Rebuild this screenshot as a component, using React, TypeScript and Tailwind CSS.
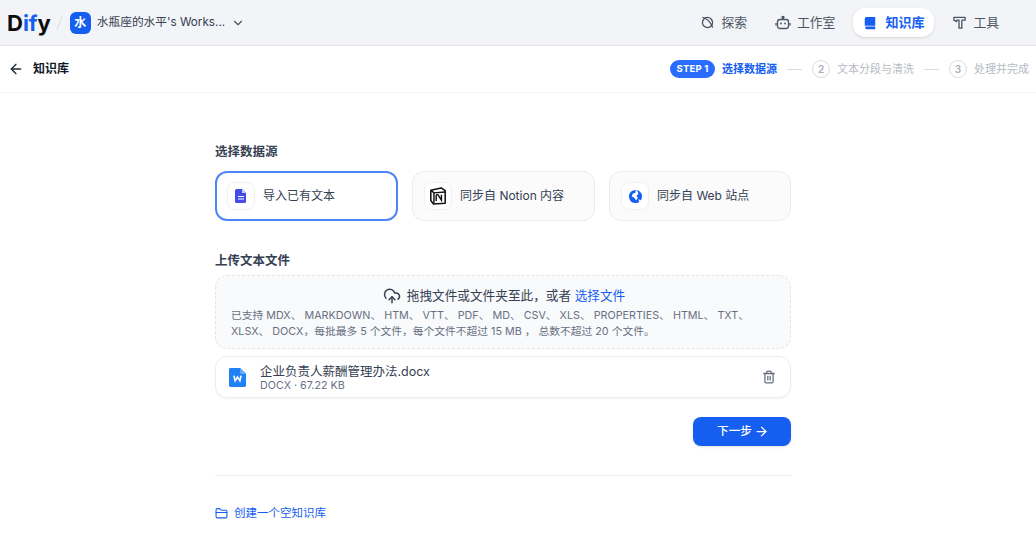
import { ArrowLeft, ArrowRight, ChevronDown, CloudUpload, Trash2, FolderClosed } from 'lucide-react';

const font = "font-['Inter','Noto_Sans_CJK_SC',sans-serif]";

function ExploreIcon() {
  return (
    <svg viewBox="0 0 16 16" className="w-[15px] h-[15px]" fill="none" stroke="#4b5563" strokeWidth="1.4">
      <circle cx="8" cy="8" r="5.4" />
      <path d="M2.5 2.500c4 .2 9.500 5.500 11 11" />
    </svg>
  );
}

function RobotIcon() {
  return (
    <svg viewBox="0 0 16 16" className="w-[16px] h-[16px]" fill="none" stroke="#4b5563" strokeWidth="1.3">
      <rect x="2.500" y="4.500" width="11" height="9" rx="2.500" />
      <circle cx="8" cy="2.300" r="1" fill="#4b5563" />
      <path d="M8 3v1.500M1 8v2.500M15 8v2.500" />
      <circle cx="6" cy="8.500" r=".9" fill="#4b5563" stroke="none" />
      <circle cx="10" cy="8.500" r=".9" fill="#4b5563" stroke="none" />
    </svg>
  );
}

function BookIcon() {
  return (
    <svg viewBox="0 0 16 16" className="w-[14px] h-[14px]" fill="#155eef">
      <path d="M4 1h9.500a.5.5 0 0 1 .5.5V11H4a2 2 0 0 0-2 .6V3a2 2 0 0 1 2-2Z" />
      <path d="M4 12h10v3H4a1.500 1.500 0 0 1 0-3Z" />
    </svg>
  );
}

function HammerIcon() {
  return (
    <svg viewBox="0 0 16 16" className="w-[15px] h-[15px]" fill="none" stroke="#4b5563" strokeWidth="1.4">
      <path d="M2 2.500h12v3h-3.500V14H7.500V5.500H5V7L2 5.500Z" strokeLinejoin="round" />
    </svg>
  );
}

function DocIcon() {
  return (
    <svg viewBox="0 0 16 16" className="w-[16px] h-[16px]">
      <path d="M3.500 1H9l4 4v8.500A1.500 1.500 0 0 1 11.500 15h-8A1.500 1.500 0 0 1 2 13.500v-11A1.500 1.500 0 0 1 3.500 1Z" fill="#444ce7" />
      <path d="M9 1v4h4Z" fill="#c7d0fb" />
      <path d="M5 8.500h6M5 11h6" stroke="#fff" strokeWidth="1.100" />
    </svg>
  );
}

function NotionIcon() {
  return (
    <svg viewBox="0 0 20 20" className="w-[18px] h-[18px]">
      <path d="M2 3.500 13.500 1l4.500 3v14L5 19l-3-4Z" fill="#fff" stroke="#111" strokeWidth="1.700" strokeLinejoin="round" />
      <path d="M2.500 4 5.500 6.500 18 5.500" fill="none" stroke="#111" strokeWidth="1.600" />
      <path d="M5.500 6.500V18.500" stroke="#111" strokeWidth="1.600" />
      <path d="M8 8.500h1.800l4 6v-6M8 15.500V9" fill="none" stroke="#111" strokeWidth="1.600" />
    </svg>
  );
}

function GlobeIcon() {
  return (
    <svg viewBox="0 0 16 16" className="w-[15px] h-[15px]">
      <circle cx="8" cy="8" r="7" fill="#155eef" />
      <path d="M8 1c2 1 3.500 2.500 3 4.500L9 7l1.500 2.500L8.500 12l-2-3L4 8l1-3 3-1Z" fill="#fff" />
      <path d="M11 11l3 1-2 2Z" fill="#fff" />
    </svg>
  );
}

function WordIcon() {
  return (
    <svg viewBox="0 0 18 20" className="w-[17px] h-[19px]">
      <path d="M1.500 0H12l6 6v12.500a1.500 1.500 0 0 1-1.500 1.500h-15A1.500 1.500 0 0 1 0 18.500v-17A1.500 1.500 0 0 1 1.500 0Z" fill="#2080f5" />
      <path d="M12 0l6 6h-6Z" fill="#6fb4fb" />
      <path d="M5.200 8l1.300 5.500L9 9.500l2.500 4L12.800 8" fill="none" stroke="#fff" strokeWidth="1.700" />
    </svg>
  );
}

function NavItem({ icon, label, active }: { icon: React.ReactNode; label: string; active?: boolean }) {
  return (
    <div
      className={
        active
          ? 'flex items-center gap-[8px] h-[29px] px-[10px] rounded-xl bg-white shadow-sm text-[13px] font-semibold text-[#155eef]'
          : 'flex items-center gap-[6px] h-[29px] px-[10px] rounded-xl text-[12.800px] text-[#4b5563]'
      }
    >
      {icon}
      <span>{label}</span>
    </div>
  );
}

function SourceCard({ icon, label, selected }: { icon: React.ReactNode; label: string; selected?: boolean }) {
  return (
    <div
      className={
        selected
          ? 'flex items-center h-[50px] px-[10px] rounded-xl bg-white border-2 border-[#4f86f7]'
          : 'flex items-center h-[50px] px-[11px] rounded-xl bg-[#fbfbfc] border border-[#eaecf0]'
      }
    >
      <div className="flex items-center justify-center w-[28px] h-[28px] rounded-lg bg-white border border-[#f0f1f3] mr-[8px]">
        {icon}
      </div>
      <span className="text-[12px] text-[#354052]">{label}</span>
    </div>
  );
}

function StepNumber({ n }: { n: number }) {
  return (
    <span className="flex items-center justify-center w-[18px] h-[18px] rounded-full border border-[#d9dce1] text-[10px] font-semibold text-[#a8adb6]">
      {n}
    </span>
  );
}

export default function App() {
  return (
    <div className={`${font} w-[1036px] h-[541px] overflow-hidden bg-white`}>
      {/* Top nav */}
      <div className="flex items-center justify-between h-[46px] pl-[7px] pr-[27px] bg-[#f2f4f7] border-b border-[#e1e3e8]">
        <div className="flex items-center">
          <span className="text-[22px] leading-none font-bold text-[#0b0b0e]">
            D<span className="text-[#155eef]">if</span>y
          </span>
          <span className="ml-[8px] mr-[10px] w-px h-[14px] rotate-[20deg] bg-[#dcdfe4]" />
          <span className="flex items-center justify-center w-[21px] h-[22px] rounded-md bg-[#155eef] text-[12px] font-semibold text-white">
            水
          </span>
          <span className="ml-[6px] text-[11.700px] text-[#354052]">水瓶座的水平's Works...</span>
          <ChevronDown className="ml-[6px] w-[14px] h-[14px] text-[#4b5563]" />
        </div>
        <div className="flex items-center gap-[8px]">
          <NavItem icon={<ExploreIcon />} label="探索" />
          <NavItem icon={<RobotIcon />} label="工作室" />
          <NavItem icon={<BookIcon />} label="知识库" active />
          <NavItem icon={<HammerIcon />} label="工具" />
        </div>
      </div>

      {/* Step bar */}
      <div className="flex items-center justify-between h-[47px] pl-[8px] pr-[7px] border-b border-[#f2f3f5]">
        <div className="flex items-center gap-[9px]">
          <ArrowLeft className="w-[16px] h-[16px] text-[#1f2937]" strokeWidth={2} />
          <span className="text-[12px] font-semibold text-[#101828]">知识库</span>
        </div>
        <div className="flex items-center">
          <span className="flex items-center justify-center w-[45px] h-[18px] rounded-full bg-[#296dff] text-[9.500px] font-bold tracking-[0.2px] text-white">
            STEP 1
          </span>
          <span className="ml-[7px] text-[11px] font-semibold text-[#155eef]">选择数据源</span>
          <span className="mx-[10px] w-[15px] h-px bg-[#d9dce1]" />
          <StepNumber n={2} />
          <span className="ml-[7px] text-[11px] text-[#b6bac2]">文本分段与清洗</span>
          <span className="mx-[10px] w-[15px] h-px bg-[#d9dce1]" />
          <StepNumber n={3} />
          <span className="ml-[7px] text-[11px] text-[#b6bac2]">处理并完成</span>
        </div>
      </div>

      {/* Main column */}
      <div className="w-[576px] ml-[215px] pt-[49px]">
        <div className="text-[12.500px] leading-[20px] font-semibold text-[#354052] mb-[9px]">选择数据源</div>
        <div className="grid grid-cols-[183px_183px_182px] gap-[14px] mb-[30px]">
          <SourceCard icon={<DocIcon />} label="导入已有文本" selected />
          <SourceCard icon={<NotionIcon />} label="同步自 Notion 内容" />
          <SourceCard icon={<GlobeIcon />} label="同步自 Web 站点" />
        </div>

        <div className="text-[12.500px] leading-[20px] font-semibold text-[#354052] mb-[4px]">上传文本文件</div>
        <div className="h-[74px] px-[15px] pt-[10px] rounded-xl bg-[#f9fafb] border border-dashed border-[#e3e5e9]">
          <div className="flex items-center justify-center h-[20px] pl-[2px] text-[12.650px] text-[#354052]">
            <CloudUpload className="w-[18px] h-[18px] mr-[6px] text-[#354052]" />
            <span>
              拖拽文件或文件夹至此，或者 <span className="text-[#155eef]">选择文件</span>
            </span>
          </div>
          <div className="mt-[2px] text-[10.750px] leading-[16px] text-[#676f83] whitespace-pre-wrap">
            {'已支持 MDX、 MARKDOWN、 HTM、 VTT、 PDF、 MD、 CSV、 XLS、 PROPERTIES、 HTML、 TXT、\nXLSX、 DOCX，每批最多 5 个文件，每个文件不超过 15 MB ， 总数不超过 20 个文件。'}
          </div>
        </div>

        <div className="flex items-center h-[42px] mt-[7px] pl-[13px] pr-[14px] rounded-xl bg-white border border-[#eceef1] shadow-[0_1px_2px_rgba(16,24,40,0.05)]">
          <WordIcon />
          <div className="ml-[14px] flex-1 pt-[2px]">
            <div className="text-[12.500px] leading-[16px] text-[#354052]">企业负责人薪酬管理办法.docx</div>
            <div className="text-[10.700px] leading-[12px] text-[#676f83]">DOCX · 67.22 KB</div>
          </div>
          <Trash2 className="w-[14px] h-[14px] text-[#676f83]" strokeWidth={2.2} />
        </div>

        <div className="flex justify-end mt-[19px]">
          <button className="flex items-center justify-center gap-[2px] w-[98px] h-[29px] pl-[2px] rounded-lg bg-[#155eef] text-[11.700px] font-medium text-white shadow-sm">
            下一步
            <ArrowRight className="w-[15px] h-[15px]" />
          </button>
        </div>

        <div className="mt-[29px] h-px bg-[#eeeff1]" />

        <div className="flex items-center gap-[6px] mt-[29px] text-[11.500px] text-[#155eef]">
          <FolderClosed className="w-[13px] h-[13px]" />
          <span>创建一个空知识库</span>
        </div>
      </div>
    </div>
  );
}
